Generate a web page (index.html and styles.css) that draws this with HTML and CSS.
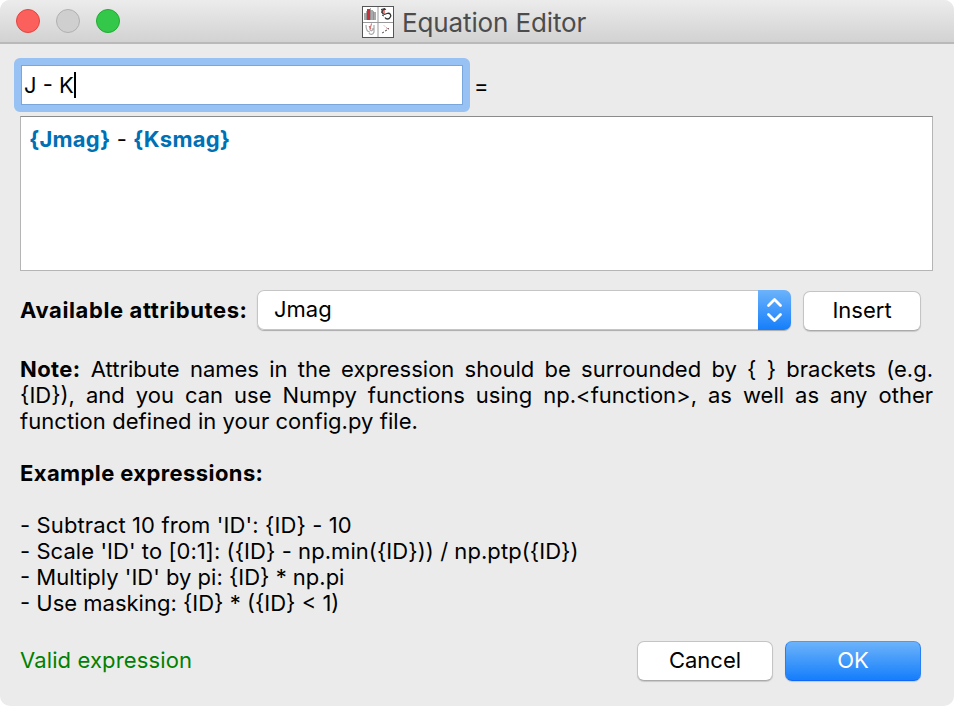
FILE: index.html
```html
<!DOCTYPE html>
<html lang="en">
<head>
<meta charset="utf-8">
<title>Equation Editor</title>
<link rel="stylesheet" href="styles.css">
</head>
<body>
<div class="window">
  <header class="titlebar">
    <div class="lights"><i class="light close"></i><i class="light minimize"></i><i class="light zoom"></i></div>
    <svg class="app-icon" width="32" height="32" viewBox="0 0 32 32" fill="none">
      <rect x=".5" y=".5" width="31" height="31" fill="#fff" stroke="#555"/>
      <path d="M16 1v30M1 16.500h30" stroke="#999"/>
      <path d="M2 7h3v7H2zM8 4h3v10H8zM11 6h3v8h-3z" fill="#aaa"/>
      <path d="M5 3h3v11H5z" fill="#c9303c"/>
      <path d="M4.500 5v9M8.500 2v12M11.500 5v9" stroke="#888" stroke-width=".7"/>
      <path d="M19 3h4v4h-4z" fill="#e98080"/>
      <path d="M24 3.500c-2-1-4 1-4 3 1 2 3 2 5 1 3-1 5 2 3 4-1 2-4 2-5 0" stroke="#333" stroke-width="1.300"/>
      <path d="M19 3.500l4-1M20 9l2 1" stroke="#333"/>
      <path d="M4 19c0 6 2 7 4 7M8 20c-1 6 3 6 3 2M12 19v7c-1 3-4 3-5 1" stroke="#aaa" stroke-width="1.200"/>
      <path d="M9.500 17.500l-1 4M7 20l2 3" stroke="#d65b5b"/>
      <path d="M20 27l2-1M23 25l2-1M26 23l1-1" stroke="#555"/>
      <path d="M22 19.500l1 1M24 21.500l3 2" stroke="#e38080"/>
    </svg>
    <h1 class="title">Equation Editor</h1>
  </header>
  <main class="content">
    <div class="name-row">
      <div class="name-field"><span class="name-text">J - K</span><i class="caret"></i></div>
      <span class="equals">=</span>
    </div>
    <div class="expression"><b>{Jmag}</b> - <b>{Ksmag}</b></div>
    <div class="attributes">
      <b class="attr-label">Available attributes:</b>
      <div class="select"><span class="select-text">Jmag</span>
        <span class="stepper"><svg width="33" height="40" viewBox="0 0 33 40" fill="none" stroke="#fff" stroke-width="2.800" stroke-linecap="round" stroke-linejoin="round"><path d="M10.500 15.500l6-6 6 6M10.500 24.500l6 6 6-6"/></svg></span>
      </div>
      <button class="button insert">Insert</button>
    </div>
    <div class="help">
      <p class="line full"><b>Note:</b> Attribute names in the expression should be surrounded by { } brackets (e.g.</p>
      <p class="line full">{ID}), and you can use Numpy functions using np.&lt;function&gt;, as well as any other</p>
      <p class="line loose">function defined in your config.py file.</p>
      <p class="line heading"><b>Example expressions:</b></p>
      <p class="line looser">- Subtract 10 from 'ID': {ID} - 10</p>
      <p class="line loose">- Scale 'ID' to [0:1]: ({ID} - np.min({ID})) / np.ptp({ID})</p>
      <p class="line">- Multiply 'ID' by pi: {ID} * np.pi</p>
      <p class="line">- Use masking: {ID} * ({ID} &lt; 1)</p>
    </div>
    <footer class="footer">
      <span class="status">Valid expression</span>
      <button class="button cancel">Cancel</button>
      <button class="button ok">OK</button>
    </footer>
  </main>
</div>
</body>
</html>
```
FILE: styles.css
```css
* { box-sizing: border-box; }
body { margin: 0; background: #fff; }
.window {
  width: 954px; height: 706px; overflow: hidden;
  border-radius: 10px; background: #ebebeb; color: #000;
  font: 22px/26px Inter, "Liberation Sans", sans-serif;
  white-space: nowrap;
}
b { font-weight: 700; letter-spacing: .4px; }
.titlebar {
  display: flex; align-items: center; height: 44px;
  padding-left: 16px;
  background: linear-gradient(#ececec, #d2d2d2);
  border-bottom: 2px solid #b9b9b9;
}
.lights { display: flex; gap: 16px; width: 346px; }
.light { width: 24px; height: 24px; border-radius: 50%; border: 1px solid; }
.close { background: #fc605c; border-color: #e2443f; }
.minimize { background: #cfcfcf; border-color: #b0b0b0; }
.zoom { background: #34c84a; border-color: #20aa32; }
.app-icon { flex: none; margin-top: 1px; }
.title { margin: 4px 0 0 8px; font-size: 26px; line-height: 32px; font-weight: 400; letter-spacing: -.12px; color: #4c4c4c; }
.content { padding: 14px 21px 0 20px; }
.name-row { display: flex; align-items: center; height: 54px; margin-left: -6px; }
.name-field {
  display: flex; align-items: center; width: 456px; height: 54px;
  padding-left: 3px; background: #fff; border: 7px solid #97c2f3; border-radius: 6px;
  box-shadow: inset 0 0 0 1px #79a6db;
}
.caret { width: 2px; height: 26px; background: #000; }
.equals { margin: 1px 0 0 4px; }
.expression {
  height: 155px; margin-top: 4px; padding: 9px 8px;
  background: #fff; border: 1px solid #b5b5b5; border-top-color: #8b8b8b;
}
.expression b { color: #0070b5; letter-spacing: .2px; }
.attributes { display: flex; align-items: center; height: 40px; margin-top: 19px; }
.attr-label { width: 237px; letter-spacing: .6px; }
.select {
  display: flex; justify-content: space-between; align-items: center;
  width: 534px; height: 40px; padding-left: 17px; overflow: hidden;
  border-radius: 7px; background: #fff;
  box-shadow: inset 0 0 0 1px #c5c5c5, 0 1px 1px #aaa;
}
.select-text { margin-top: -2px; }
.stepper { width: 33px; height: 40px; background: linear-gradient(#6cb3fa, #157efb); }
.button {
  display: block; height: 40px; padding: 0 0 2px; border: 1px solid #c4c4c4;
  border-bottom-color: #aaa; border-radius: 7px; background: #fff; color: #000;
  font: inherit; box-shadow: 0 1px 1px rgba(0, 0, 0, .15);
}
.insert { width: 118px; margin: 2px 0 0 12px; }
.help { margin-top: 26px; }
.line { margin: 0; height: 26px; }
.full { text-align: justify; text-align-last: justify; white-space: normal; }
.loose { letter-spacing: .06px; }
.looser { letter-spacing: .12px; }
.heading { margin: 26px 0; }
.footer { display: flex; align-items: center; margin-top: 25px; }
.status { width: 617px; margin-top: -2px; letter-spacing: .13px; color: #008000; }
.cancel { width: 136px; }
.ok { width: 136px; margin-left: 12px; color: #fff; background: linear-gradient(#6cb3fa, #157efb); border-color: #4a9bef #287ff2 #1268f5; }
```
